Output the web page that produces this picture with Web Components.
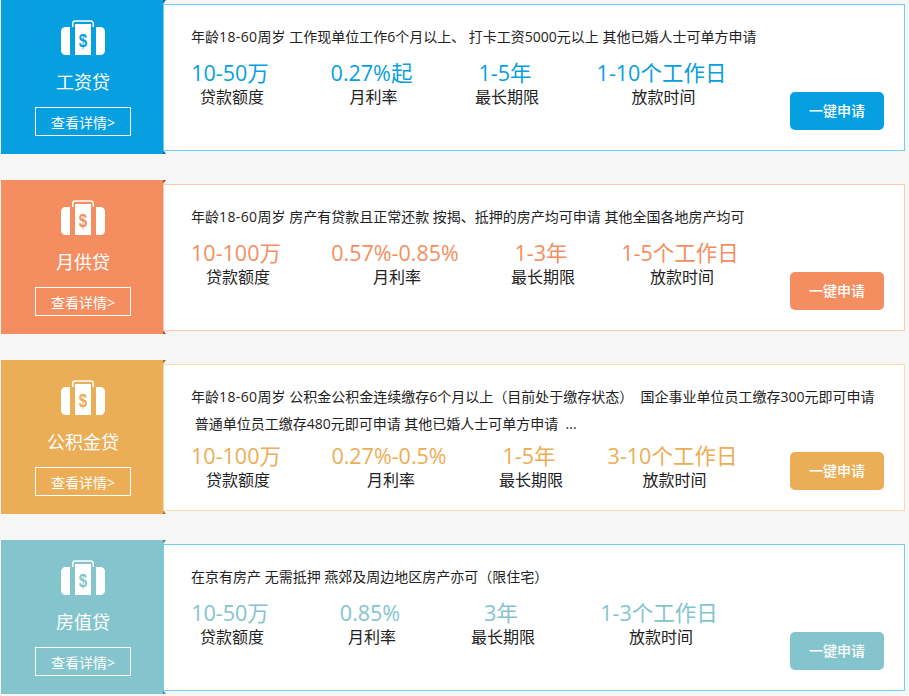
<!DOCTYPE html>
<html lang="zh"><head><meta charset="utf-8"><style>
html,body{margin:0;padding:0;background:#f6f6f6;overflow:hidden}
body{font-family:"Open Sans","Noto Sans CJK SC",sans-serif;height:696px}
.n{letter-spacing:.4px}
</style></head><body>
<loan-list>
<loan-card name="工资贷" color="#069fe0" border="#6fcdf5" dark="#0a6ca0">
  <loan-desc>年龄<span class="n">18-60</span>周岁 工作现单位工作6个月以上、 打卡工资5000元以上 其他已婚人士可单方申请</loan-desc>
  <loan-stat w="78" g="62" v="10-50万" l="贷款额度"></loan-stat>
  <loan-stat w="81" g="61" v="0.27%起" l="月利率"></loan-stat>
  <loan-stat w="64" g="61" v="1-5年" l="最长期限"></loan-stat>
  <loan-stat w="127" g="0" v="1-10个工作日" l="放款时间"></loan-stat>
</loan-card>
<loan-card name="月供贷" color="#f48e60" border="#fbcab3" dark="#a5532b">
  <loan-desc>年龄<span class="n">18-60</span>周岁 房产有贷款且正常还款 按揭、抵押的房产均可申请 其他全国各地房产均可</loan-desc>
  <loan-stat w="90" g="50" v="10-100万" l="贷款额度"></loan-stat>
  <loan-stat w="128" g="50" v="0.57%-0.85%" l="月利率"></loan-stat>
  <loan-stat w="64" g="49" v="1-3年" l="最长期限"></loan-stat>
  <loan-stat w="116" g="0" v="1-5个工作日" l="放款时间"></loan-stat>
</loan-card>
<loan-card name="公积金贷" color="#ebad55" border="#f7d9ab" dark="#a8752a">
  <loan-desc two>年龄<span class="n">18-60</span>周岁 公积金公积金连续缴存6个月以上（目前处于缴存状态）&nbsp; 国企事业单位员工缴存300元即可申请<br>&nbsp;普通单位员工缴存480元即可申请 其他已婚人士可单方申请 &nbsp;...</loan-desc>
  <loan-stat w="90" g="50" v="10-100万" l="贷款额度"></loan-stat>
  <loan-stat w="116" g="50" v="0.27%-0.5%" l="月利率"></loan-stat>
  <loan-stat w="64" g="48" v="1-5年" l="最长期限"></loan-stat>
  <loan-stat w="127" g="0" v="3-10个工作日" l="放款时间"></loan-stat>
</loan-card>
<loan-card name="房值贷" color="#84c5cd" border="#6fcdf5" dark="#4f8d95">
  <loan-desc>在京有房产 无需抵押 燕郊及周边地区房产亦可（限住宅）</loan-desc>
  <loan-stat w="78" g="62" v="10-50万" l="贷款额度"></loan-stat>
  <loan-stat w="78" g="60" v="0.85%" l="月利率"></loan-stat>
  <loan-stat w="64" g="68" v="3年" l="最长期限"></loan-stat>
  <loan-stat w="116" g="0" v="1-3个工作日" l="放款时间"></loan-stat>
</loan-card>
</loan-list>
<script>
class LoanList extends HTMLElement{constructor(){super();this.attachShadow({mode:'open'}).innerHTML=`<style>:host{display:flex;flex-direction:column;gap:26px;padding-left:1px}</style><slot></slot>`}}
class LoanDesc extends HTMLElement{constructor(){super();this.attachShadow({mode:'open'}).innerHTML=`<style>:host{display:block;font-size:14px;line-height:27px;color:#222;white-space:nowrap}</style><slot></slot>`}}
class LoanStat extends HTMLElement{constructor(){super();const w=this.getAttribute('w'),g=this.getAttribute('g');
this.attachShadow({mode:'open'}).innerHTML=`<style>:host{display:block;flex:none;width:${w}px;margin-right:${g}px;text-align:center;white-space:nowrap}
.v{font-size:21.5px;line-height:26px;color:var(--accent);display:flex;justify-content:center}
.l{font-size:16px;line-height:22px;color:#222;display:flex;justify-content:center;padding-left:4px}</style>
<div class="v"><span>${this.getAttribute('v')}</span></div><div class="l"><span>${this.getAttribute('l')}</span></div>`}}
class LoanCard extends HTMLElement{constructor(){super();const c=this.getAttribute('color'),b=this.getAttribute('border'),d=this.getAttribute('dark'),n=this.getAttribute('name');
this.attachShadow({mode:'open'}).innerHTML=`<style>
:host{display:flex;height:154px;--accent:${c}}
.side{box-sizing:border-box;flex:none;width:162px;padding-left:2px;background:${c};color:#fff;display:flex;flex-direction:column;align-items:center;position:relative}
.side::before,.side::after{content:"";position:absolute;left:100%;width:0;height:0;border-left:3px solid ${d}}
.side::before{top:0;border-bottom:4px solid transparent}
.side::after{bottom:0;border-top:4px solid transparent}
svg{display:block;margin-top:20px;width:44px;height:35px}
.name{font-size:18px;line-height:26px;margin-top:14px}
.more{box-sizing:border-box;width:96px;height:29px;margin-top:12px;border:1px solid #fff;font-size:14px;line-height:29px;text-align:center}
.box{box-sizing:border-box;flex:none;width:742px;height:147px;margin-top:4px;background:#fff;border:1px solid ${b};padding:18px 20px 0 27px;position:relative;display:flex;flex-direction:column}
.stats{display:flex;margin-top:var(--stats-top,10px)}
.apply{position:absolute;right:20px;bottom:20px;width:94px;height:38px;border-radius:5px;background:${c};color:#fff;font-size:14px;font-weight:500;line-height:38px;text-align:center}
</style>
<div class="side">
<svg viewBox="0 0 44 35"><path fill="#fff" d="M9 7H4.500A4.500 4.500 0 0 0 0 11.500V30.500A4.500 4.500 0 0 0 4.500 35H9zM35 7h4.500A4.500 4.500 0 0 1 44 11.500V30.500A4.500 4.500 0 0 1 39.500 35H35zM14 4H30V35H14z"/><path fill="none" stroke="#fff" stroke-width="1.500" d="M11.750 7V3.500A2.500 2.500 0 0 1 14.250 1H29.750A2.500 2.500 0 0 1 32.250 3.500V7"/><text transform="translate(22 27) scale(.8 1)" text-anchor="middle" font-family="Liberation Sans" font-weight="700" font-size="19" fill="${c}">$</text></svg>
<div class="name">${n}</div><div class="more">查看详情&gt;</div></div>
<div class="box"><slot name="d"></slot><div class="stats"><slot></slot></div><div class="apply">一键申请</div></div>`;
this.querySelector('loan-desc').slot='d';
if(this.querySelector('loan-desc[two]'))this.style.setProperty('--stats-top','6px');}}
customElements.define('loan-list',LoanList);customElements.define('loan-desc',LoanDesc);customElements.define('loan-stat',LoanStat);customElements.define('loan-card',LoanCard);
</script>
</body></html>
